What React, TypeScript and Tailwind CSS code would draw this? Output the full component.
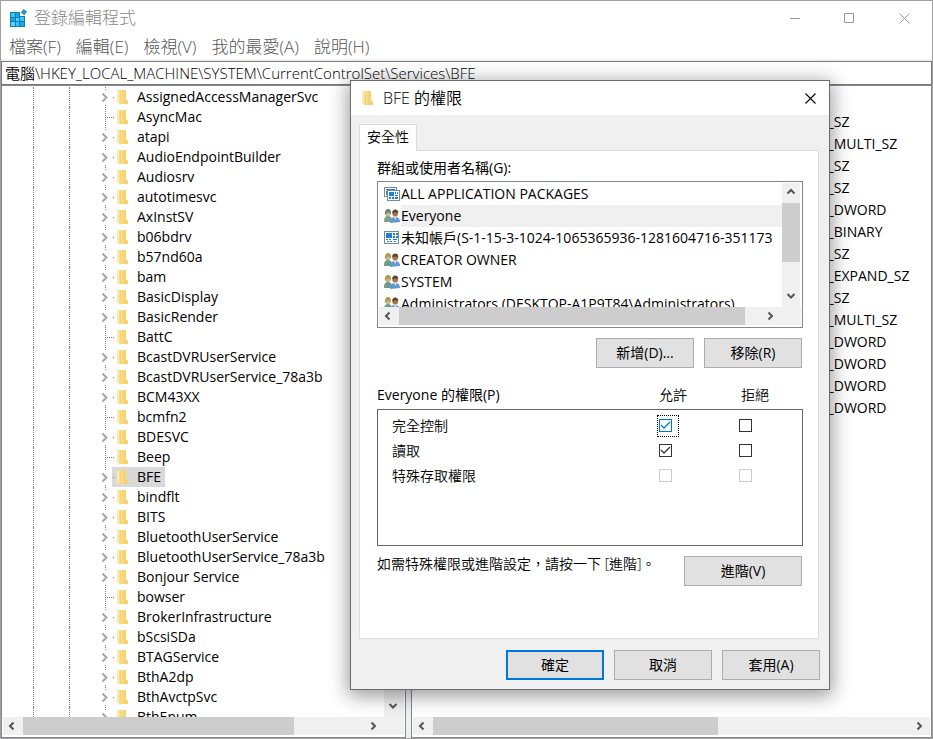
import { useState, ReactNode } from 'react';

interface TreeKey {
  name: string;
  leaf?: boolean;
}

const KEYS: TreeKey[] = [
  { name: 'AssignedAccessManagerSvc' },
  { name: 'AsyncMac', leaf: true },
  { name: 'atapi' },
  { name: 'AudioEndpointBuilder' },
  { name: 'Audiosrv' },
  { name: 'autotimesvc' },
  { name: 'AxInstSV' },
  { name: 'b06bdrv' },
  { name: 'b57nd60a' },
  { name: 'bam' },
  { name: 'BasicDisplay' },
  { name: 'BasicRender' },
  { name: 'BattC', leaf: true },
  { name: 'BcastDVRUserService' },
  { name: 'BcastDVRUserService_78a3b' },
  { name: 'BCM43XX' },
  { name: 'bcmfn2', leaf: true },
  { name: 'BDESVC' },
  { name: 'Beep', leaf: true },
  { name: 'BFE' },
  { name: 'bindflt' },
  { name: 'BITS' },
  { name: 'BluetoothUserService' },
  { name: 'BluetoothUserService_78a3b' },
  { name: 'Bonjour Service' },
  { name: 'bowser', leaf: true },
  { name: 'BrokerInfrastructure' },
  { name: 'bScsiSDa' },
  { name: 'BTAGService' },
  { name: 'BthA2dp' },
  { name: 'BthAvctpSvc' },
  { name: 'BthEnum' },
];

const VALUE_TYPES = [
  'REG_SZ',
  'REG_MULTI_SZ',
  'REG_SZ',
  'REG_SZ',
  'REG_DWORD',
  'REG_BINARY',
  'REG_SZ',
  'REG_EXPAND_SZ',
  'REG_SZ',
  'REG_MULTI_SZ',
  'REG_DWORD',
  'REG_DWORD',
  'REG_DWORD',
  'REG_DWORD',
];

const MENUS = ['檔案(F)', '編輯(E)', '檢視(V)', '我的最愛(A)', '說明(H)'];

type PrincipalKind = 'packages' | 'everyone' | 'unknown' | 'group';

const PRINCIPALS: { name: string; kind: PrincipalKind }[] = [
  { name: 'ALL APPLICATION PACKAGES', kind: 'packages' },
  { name: 'Everyone', kind: 'everyone' },
  { name: '未知帳戶(S-1-15-3-1024-1065365936-1281604716-351173', kind: 'unknown' },
  { name: 'CREATOR OWNER', kind: 'group' },
  { name: 'SYSTEM', kind: 'group' },
  { name: 'Administrators (DESKTOP-A1P9T84\\Administrators)', kind: 'group' },
];

function FolderIcon() {
  return (
    <svg width="12" height="16" viewBox="0 0 12 16" className="shrink-0">
      <path d="M1 1h8v9l2 2v3H3z" fill="#f9dc87" />
      <path d="M6 1h3v9l2 2v3H6z" fill="#f3cb62" opacity=".6" />
      <path d="M0 1l3 1.500V15.500L0 13.500z" fill="#fdeab2" />
      <path d="M3 2.500v13" stroke="#e9c25c" strokeWidth=".6" />
    </svg>
  );
}

function RegeditIcon() {
  return (
    <svg width="18" height="18" viewBox="0 0 18 18">
      <path d="M1 3h10v4h5v11H1z" fill="#0b7db8" />
      <path d="M2 4h4v4H2zM11 8h4v4h-4zM7 13h3v4H7z" fill="#3cc4f2" />
      <path d="M7 4h3v4H7zM2 9h4v3H2zM11 13h4v4h-4z" fill="#1da6e0" />
      <path d="M7 9h3v3H7zM2 13h4v4H2z" fill="#59d2f8" />
      <path d="M14.500 0l3.500 2.500-2.500 3.700-3.700-2.500z" fill="#2b93c4" />
    </svg>
  );
}

function TreeBranch({ leaf }: { leaf?: boolean }) {
  return (
    <svg width="15" height="20" viewBox="0 0 15 20" className="shrink-0" fill="none">
      {leaf ? (
        <path d="M8.500 0v20M8 10.500h7" stroke="#808080" strokeDasharray="1 1" shapeRendering="crispEdges" />
      ) : (
        <>
          <path d="M8.500 0v3M8.500 18v2" stroke="#808080" strokeDasharray="1 1" shapeRendering="crispEdges" />
          <path d="M5.500 6.500l4 4-4 4" stroke="#a6a6a6" strokeWidth="2" />
        </>
      )}
    </svg>
  );
}

function PeopleIcon({ left, hair }: { left: string; hair: string }) {
  return (
    <svg width="18" height="16" viewBox="0 0 18 16" className="shrink-0">
      <path d="M1 14c0-4 1-6 4-6s4 2 4 6z" fill={left} />
      <circle cx="5" cy="5.500" r="2.600" fill="#c9b48c" />
      <path d="M2 7c-.5-4 1-6 3.200-6S8.500 3 8 6.500C7 4.500 5 4 4 5z" fill={hair} />
      <path d="M7 15c0-4 1.500-6 5-6s5 2 5 5z" fill="#5f9bd0" />
      <path d="M11 9l1.200 3L13.500 9z" fill="#e4eef7" />
      <circle cx="12.200" cy="5.800" r="2.800" fill="#a87444" />
      <path d="M9.200 5.500C9 2.500 10.500 1.500 12.300 1.500s3.200 1.200 3 4C14 4 11 4.500 9.200 5.500z" fill="#5a4636" />
    </svg>
  );
}

function PrincipalIcon({ kind }: { kind: PrincipalKind }) {
  if (kind === 'everyone') return <PeopleIcon left="#7fa08c" hair="#6f8478" />;
  if (kind === 'group') return <PeopleIcon left="#6f9c86" hair="#b09a52" />;
  if (kind === 'packages') {
    return (
      <svg width="18" height="16" viewBox="0 0 18 16" className="shrink-0" shapeRendering="crispEdges">
        <path d="M1.500 1.500h12v9h-12z" fill="#fff" stroke="#7d8790" />
        <path d="M3 3h9v1H3zM3 5h1v4H3z" fill="#1d7fd6" />
        <path d="M4.500 4.500h12v10h-12z" fill="#fff" stroke="#7d8790" />
        <path d="M6 6h5v4H6zM12 6h1v2h-1zM14 6h1v2h-1zM12 9h3v1h-3zM6 11h2v2H6zM9 11h2v2H9zM12 11h3v2h-3z" fill="#1d7fd6" />
      </svg>
    );
  }
  return (
    <svg width="18" height="16" viewBox="0 0 18 16" className="shrink-0" shapeRendering="crispEdges">
      <path d="M1.500 1.500h14v12h-14z" fill="#fff" stroke="#7d8790" />
      <path d="M3 3h6v5H3zM10 3h2v2h-2zM13 3h2v2h-2zM10 6h2v2h-2zM13 6h2v2h-2zM3 9h2v1H3zM6 9h2v1H6zM10 9h4v1h-4zM4 11h2v1H4zM7 11h2v1H7zM11 11h2v1h-2z" fill="#1d7fd6" />
    </svg>
  );
}

const ARROWS = {
  up: 'M5.500 10.500L9 7l3.500 3.500',
  down: 'M5.500 7L9 10.500 12.500 7',
  left: 'M10.500 5.500L7 9l3.500 3.500',
  right: 'M7.500 5.500L11 9l-3.500 3.500',
};

function ScrollArrow({ dir, label }: { dir: keyof typeof ARROWS; label: string }) {
  return (
    <button type="button" aria-label={label} className="flex size-[18px] shrink-0 items-center justify-center">
      <svg width="18" height="18" viewBox="0 0 18 18" fill="none" stroke="#555" strokeWidth="2">
        <path d={ARROWS[dir]} />
      </svg>
    </button>
  );
}

function HScroll({ thumb, className = '' }: { thumb: string; className?: string }) {
  return (
    <div className={`flex h-[18px] shrink-0 bg-[#f0f0f0] ${className}`}>
      <ScrollArrow dir="left" label="向左捲動" />
      <div className="mx-0.5 flex-1">
        <div className={`h-full bg-[#cdcdcd] ${thumb}`} />
      </div>
      <ScrollArrow dir="right" label="向右捲動" />
    </div>
  );
}

function PushButton({ children, primary, className = 'w-[98px]', onClick }: {
  children: ReactNode;
  primary?: boolean;
  className?: string;
  onClick?: () => void;
}) {
  return (
    <button
      type="button"
      onClick={onClick}
      className={`h-[30px] bg-[#e1e1e1] text-sm ${primary ? 'border-2 border-[#0078d7]' : 'border border-[#adadad]'} ${className}`}
    >
      {children}
    </button>
  );
}

function PermCheck({ label, defaultChecked, disabled, focused }: {
  label: string;
  defaultChecked?: boolean;
  disabled?: boolean;
  focused?: boolean;
}) {
  const [checked, setChecked] = useState(!!defaultChecked);
  const border = disabled ? 'border-[#cccccc]' : focused ? 'border-[#0078d7]' : 'border-[#333333]';

  return (
    <span className={`relative flex h-[22px] w-[22px] items-center border border-dotted pl-px ${focused ? 'border-black' : 'border-transparent'}`}>
      <input
        type="checkbox"
        aria-label={label}
        checked={checked}
        disabled={disabled}
        onChange={(e) => setChecked(e.target.checked)}
        className={`size-[13px] appearance-none border bg-white ${border}`}
      />
      {checked && (
        <svg
          width="13"
          height="13"
          viewBox="0 0 13 13"
          fill="none"
          stroke={focused ? '#0078d7' : '#333333'}
          strokeWidth="1.300"
          className="pointer-events-none absolute left-px"
        >
          <path d="M2 6l3 3L11 3" />
        </svg>
      )}
    </span>
  );
}

function PermRow({ name, allow, focused, disabled }: { name: string; allow?: boolean; focused?: boolean; disabled?: boolean }) {
  return (
    <tr className="h-[25px]">
      <td className="pl-3.5">{name}</td>
      <td className="w-20">
        <PermCheck label={`${name} 允許`} defaultChecked={allow} focused={focused} disabled={disabled} />
      </td>
      <td className="w-[65px]">
        <PermCheck label={`${name} 拒絕`} disabled={disabled} />
      </td>
    </tr>
  );
}

function PermissionsDialog() {
  const [selected, setSelected] = useState('Everyone');

  return (
    <div
      role="dialog"
      aria-labelledby="perm-title"
      className="absolute left-[349px] top-[79px] flex h-[610px] w-[480px] flex-col border border-[#6b6b6b] bg-[#f0f0f0] shadow-[0_4px_18px_2px_rgba(0,0,0,0.4)]"
    >
      <div className="flex h-[34px] shrink-0 items-center bg-white pl-[11px]">
        <FolderIcon />
        <h2 id="perm-title" className="flex-1 pl-[9px] text-base font-[350]">BFE 的權限</h2>
        <button type="button" aria-label="關閉" className="flex h-full w-[38px] items-center justify-center">
          <svg width="11" height="11" viewBox="0 0 11 11" stroke="#000" strokeWidth="1.100">
            <path d="M.5.5l10 10M10.500.5l-10 10" />
          </svg>
        </button>
      </div>

      <div className="flex flex-1 flex-col px-2 pt-[9px]">
        <button type="button" role="tab" aria-selected="true" className="z-10 -mb-px h-[27px] w-[58px] border border-b-0 border-[#dcdcdc] bg-white pb-0.5 text-sm font-[350]">
          安全性
        </button>
        <div className="mr-0.5 h-[489px] border border-[#dcdcdc] bg-white px-[17px] pt-1.5">
          <p id="groups-label" className="h-6 text-sm leading-[22px]">群組或使用者名稱(G):</p>
          <div className="-mr-0.5 flex h-[147px] flex-col border border-[#828790] p-px">
            <div className="flex min-h-0 flex-1">
              <ul role="listbox" aria-labelledby="groups-label" className="min-w-0 flex-1 overflow-hidden">
                {PRINCIPALS.map((p) => (
                  <li
                    key={p.name}
                    role="option"
                    aria-selected={p.name === selected}
                    onClick={() => setSelected(p.name)}
                    className="flex h-[22px] items-center pl-1"
                  >
                    <PrincipalIcon kind={p.kind} />
                    <span className={`h-full flex-1 whitespace-nowrap text-sm leading-[22px] ${p.name === selected ? 'bg-[#f0f0f0]' : ''}`}>
                      {p.name}
                    </span>
                  </li>
                ))}
              </ul>
              <div className="mr-px flex w-[18px] flex-col bg-[#f0f0f0] pb-0.5">
                <ScrollArrow dir="up" label="向上捲動" />
                <div className="flex-1 pt-0.5">
                  <div className="h-[70%] bg-[#cdcdcd]" />
                </div>
                <ScrollArrow dir="down" label="向下捲動" />
              </div>
            </div>
            <HScroll thumb="w-[96%]" className="mb-px pr-[22px]" />
          </div>

          <div className="-mr-0.5 flex justify-end gap-2.5 pr-px pt-2.5">
            <PushButton>新增(D)...</PushButton>
            <PushButton>移除(R)</PushButton>
          </div>

          <div className="-mr-0.5 flex h-[41px] items-end pb-1 text-sm">
            <span className="flex-1">{selected} 的權限(P)</span>
            <span className="w-[82px] font-[350]">允許</span>
            <span className="w-[62px] font-[350]">拒絕</span>
          </div>
          <div className="-mr-0.5 h-[137px] border border-[#646464] pt-[3px]">
            <table className="w-full text-sm font-[350]">
              <tbody>
                <PermRow name="完全控制" allow focused />
                <PermRow name="讀取" allow />
                <PermRow name="特殊存取權限" disabled />
              </tbody>
            </table>
          </div>

          <div className="-mr-0.5 flex items-start justify-between pr-px pt-2.5">
            <p className="text-sm font-[350] leading-4">如需特殊權限或進階設定，請按一下 [進階]。</p>
            <PushButton className="w-[118px]">進階(V)</PushButton>
          </div>
        </div>

        <div className="flex justify-end gap-2.5 pr-px pt-[11px]">
          <PushButton primary>確定</PushButton>
          <PushButton>取消</PushButton>
          <PushButton>套用(A)</PushButton>
        </div>
      </div>
    </div>
  );
}

export default function App() {
  const [current, setCurrent] = useState('BFE');

  return (
    <div className="relative flex h-screen w-full flex-col overflow-hidden border border-[#a0a0a0] bg-white font-['Open_Sans','Noto_Sans_CJK_TC',sans-serif] text-black">
      <header className="flex h-[34px] shrink-0 items-center pl-2 font-light text-[#888888]">
        <RegeditIcon />
        <h1 className="flex-1 pl-[7px] text-[17px]">登錄編輯程式</h1>
        <button type="button" aria-label="最小化" className="flex h-full w-[54px] items-center justify-center">
          <svg width="10" height="10" stroke="#999999"><path d="M0 5.500h10" /></svg>
        </button>
        <button type="button" aria-label="最大化" className="flex h-full w-[54px] items-center justify-center">
          <svg width="10" height="10" stroke="#999999" fill="none"><path d="M.5.5h9v9h-9z" /></svg>
        </button>
        <button type="button" aria-label="關閉" className="flex h-full w-14 items-center justify-center">
          <svg width="11" height="11" stroke="#999999"><path d="M.5.5l10 10M10.500.5l-10 10" /></svg>
        </button>
      </header>

      <nav className="flex h-6 shrink-0 items-center gap-[15px] pl-2 text-[17px] font-light text-[#555555]">
        {MENUS.map((m) => (
          <button key={m} type="button">{m}</button>
        ))}
      </nav>

      <div className="shrink-0 bg-[#f0f0f0] pt-0.5">
        <input
          aria-label="路徑"
          defaultValue="電腦\HKEY_LOCAL_MACHINE\SYSTEM\CurrentControlSet\Services\BFE"
          className="block h-6 w-full border border-[#7a7a7a] bg-white pb-0.5 pl-[3px] text-[15px] font-[350] outline-none"
        />
      </div>

      <main className="flex min-h-0 flex-1 gap-[5px] bg-[#f0f0f0]">
        <section className="flex w-[405px] shrink-0 flex-col border border-[#828790] bg-white p-px">
          <div className="flex min-h-0 flex-1">
            <ul role="tree" className="min-w-0 flex-1 overflow-hidden">
              {KEYS.map((k) => (
                <li key={k.name} role="treeitem" aria-selected={k.name === current} className="flex h-5 pl-[30px]">
                  <span className="w-9 border-l border-dotted border-[#808080]" />
                  <span className="w-7 border-l border-dotted border-[#808080]" />
                  <TreeBranch leaf={k.leaf} />
                  <button
                    type="button"
                    onClick={() => setCurrent(k.name)}
                    className={`flex items-center pl-px pr-1 text-sm leading-5 ${k.name === current ? 'bg-[#d9d9d9]' : ''}`}
                  >
                    <span className="mr-[3px] size-px bg-[#808080]" />
                    <FolderIcon />
                    <span className="whitespace-nowrap pl-2">{k.name}</span>
                  </button>
                </li>
              ))}
            </ul>
            <div className="flex w-5 flex-col justify-end bg-[#f0f0f0] pb-0.5">
              <ScrollArrow dir="down" label="向下捲動" />
            </div>
          </div>
          <HScroll thumb="w-[80%]" className="mb-px pr-[22px]" />
        </section>

        <section className="flex min-w-0 flex-1 flex-col border border-[#828790] bg-white p-px">
          <div className="min-h-0 flex-1 overflow-hidden pt-6">
            <table className="text-sm">
              <tbody>
                {VALUE_TYPES.map((t, i) => (
                  <tr key={i} className="h-[22px]">
                    <td className="pl-[388px] leading-[22px]">{t}</td>
                  </tr>
                ))}
              </tbody>
            </table>
          </div>
          <HScroll thumb="w-[60%]" className="mb-px pr-0.5" />
        </section>
      </main>

      <PermissionsDialog />
    </div>
  );
}
